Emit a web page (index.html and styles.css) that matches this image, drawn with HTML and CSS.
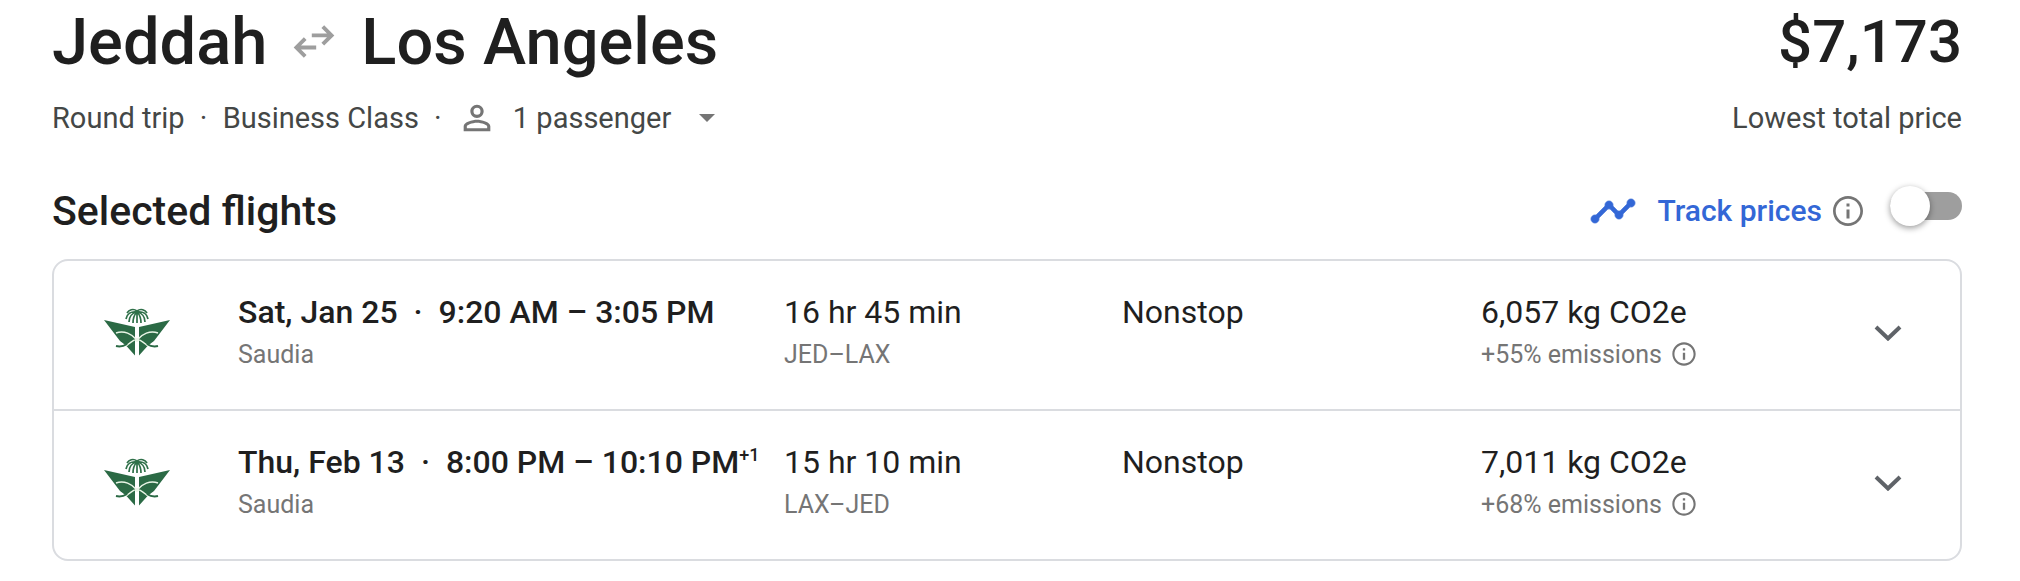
FILE: index.html
```html
<!DOCTYPE html>
<html lang="en">
    <head>
        <meta charset="utf-8">
        <title>Jeddah to Los Angeles</title>
        <meta name="viewport" content="width=device-width, initial-scale=1">
        <link rel="stylesheet" href="styles.css">
    </head>
    <body>
        <svg class="defs" width="0" height="0">
            <symbol id="info" viewBox="0 0 24 24">
                <path d="M11 7h2v2h-2zm0 4h2v6h-2zm1-9C6.48 2 2 6.48 2 12s4.48 10 10 10 10-4.48 10-10S17.52 2 12 2zm0 18.2c-4.5 0-8.2-3.7-8.2-8.2S7.5 3.8 12 3.8s8.2 3.7 8.2 8.2-3.7 8.2-8.2 8.2z"/>
            </symbol>
            <symbol id="chevron" viewBox="0 0 28 16">
                <path d="M2 2l12 11.5L26 2" fill="none" stroke="currentColor" stroke-width="4"/>
            </symbol>
            <symbol id="saudia" viewBox="0 0 66 48">
                <!-- palm -->
                <path d="M33 2v13M33 3c-4-3-8-1-10 2M33 3c4-3 8-1 10 2M33 4c-6-1-10 2-11 7M33 4c6-1 10 2 11 7M33 4c-5 1-8 5-8 10M33 4c5 1 8 5 8 10M33 4c-2 2-4 6-4 11M33 4c2 2 4 6 4 11" fill="none" stroke="#2f7049" stroke-width="1.7"/>
                <!-- wings -->
                <path d="M0 12l31 7v28.500L22 37.500l-6-4.500zM66 12l-31 7v28.500l9-10 6-4.500z" fill="#2b6a45"/>
                <!-- crossed swords -->
                <path d="M12 25c8-3 16 1 21 7 5-6 13-10 21-7M33 31c-4 1-7 4-11 7M33 31c4 1 7 4 11 7" fill="none" stroke="#e9f5e6" stroke-width="1.5"/>
                <path d="M12 38c4 1 8 0 11-2M54 38c-4 1-8 0-11-2" fill="none" stroke="#2b6a45" stroke-width="2"/>
                <circle cx="33" cy="32" r="2" fill="#e9f5e6"/>
            </symbol>
        </svg>

        <div class="trip">
            <header class="header">
                <div>
                    <h1 class="route">
                        Jeddah
                        <svg class="swap" viewBox="0 0 40 32" role="img" aria-label="to and from"><path d="M18 10h18M28 2l8 8-8 8M22 21H4M12 13l-8 8 8 8" fill="none" stroke="currentColor" stroke-width="3.5"/></svg>
                        Los Angeles
                    </h1>
                    <div class="details">
                        <span>Round trip</span>
                        <span class="dot">·</span>
                        <span>Business Class</span>
                        <span class="dot">·</span>
                        <button class="passengers" type="button">
                            <svg class="person" viewBox="0 0 24 24"><path d="M12 5.9a2.1 2.1 0 110 4.2 2.1 2.1 0 010-4.2m0 9c2.97 0 6.1 1.46 6.1 2.1v1.1H5.9V17c0-.64 3.13-2.1 6.1-2.1M12 4C9.79 4 8 5.79 8 8s1.79 4 4 4 4-1.79 4-4-1.79-4-4-4zm0 9c-2.67 0-8 1.34-8 4v3h16v-3c0-2.66-5.33-4-8-4z"/></svg>
                            1 passenger
                            <svg class="caret" viewBox="0 0 16 8"><path d="M0 0h16L8 8z"/></svg>
                        </button>
                    </div>
                </div>
                <div class="total">
                    <div class="price">$7,173</div>
                    <div class="details">Lowest total price</div>
                </div>
            </header>

            <div class="bar">
                <h2 class="heading">Selected flights</h2>
                <div class="track">
                    <svg class="timeline" viewBox="0 0 24 24"><path d="M23 8c0 1.1-.9 2-2 2-.18 0-.35-.02-.51-.07l-3.56 3.55c.05.16.07.34.07.52 0 1.1-.9 2-2 2s-2-.9-2-2c0-.18.02-.36.07-.52l-2.55-2.55c-.16.05-.34.07-.52.07s-.36-.02-.52-.07l-4.55 4.56c.05.16.07.33.07.51 0 1.1-.9 2-2 2s-2-.9-2-2 .9-2 2-2c.18 0 .35.02.51.07l4.56-4.55C8.02 9.36 8 9.18 8 9c0-1.1.9-2 2-2s2 .9 2 2c0 .18-.02.36-.07.52l2.55 2.55c.16-.05.34-.07.52-.07s.36.02.52.07l3.55-3.56C19.02 8.35 19 8.18 19 8c0-1.1.9-2 2-2s2 .9 2 2z" stroke="currentColor" stroke-width=".4"/></svg>
                    <label class="track_label" for="track">Track prices</label>
                    <svg class="info info_large"><use href="#info"/></svg>
                    <input class="switch" type="checkbox" role="switch" id="track">
                </div>
            </div>

            <ul class="flights">
                <li class="flight">
                    <svg class="logo" role="img" aria-label="Saudia"><use href="#saudia"/></svg>
                    <div>
                        <div class="main when">Sat, Jan 25 <span class="sep">·</span> 9:20 AM – 3:05 PM</div>
                        <div class="sub">Saudia</div>
                    </div>
                    <div>
                        <div class="main">16 hr 45 min</div>
                        <div class="sub">JED–LAX</div>
                    </div>
                    <div>
                        <div class="main">Nonstop</div>
                    </div>
                    <div>
                        <div class="main">6,057 kg CO2e</div>
                        <div class="sub">+55% emissions <svg class="info"><use href="#info"/></svg></div>
                    </div>
                    <button class="expand" type="button" aria-label="Flight details"><svg><use href="#chevron"/></svg></button>
                </li>
                <li class="flight">
                    <svg class="logo" role="img" aria-label="Saudia"><use href="#saudia"/></svg>
                    <div>
                        <div class="main when">Thu, Feb 13 <span class="sep">·</span> 8:00 PM – 10:10 PM<sup>+1</sup></div>
                        <div class="sub">Saudia</div>
                    </div>
                    <div>
                        <div class="main">15 hr 10 min</div>
                        <div class="sub">LAX–JED</div>
                    </div>
                    <div>
                        <div class="main">Nonstop</div>
                    </div>
                    <div>
                        <div class="main">7,011 kg CO2e</div>
                        <div class="sub">+68% emissions <svg class="info"><use href="#info"/></svg></div>
                    </div>
                    <button class="expand" type="button" aria-label="Flight details"><svg><use href="#chevron"/></svg></button>
                </li>
            </ul>
        </div>
    </body>
</html>
```
FILE: styles.css
```css
body {
    margin: 0;
    background: #fff;
    color: #1f1f1f;
    font-family: Roboto, sans-serif;
}

h1, h2, ul {
    margin: 0;
    padding: 0;
}

button {
    border: 0;
    padding: 0;
    background: none;
    color: inherit;
    font: inherit;
    cursor: pointer;
}

svg {
    flex: none;
    fill: currentColor;
}

.defs {
    position: absolute;
}

.trip {
    padding: 0 58px 20px 52px;
}

.header, .bar {
    display: flex;
    justify-content: space-between;
}

.route, .price {
    font-size: 65px;
    font-weight: 500;
    line-height: 84px;
}

.price {
    font-size: 60px;
}

.route {
    display: flex;
    align-items: center;
    gap: 25px;
}

.swap {
    width: 44px;
    height: 36px;
    color: #9e9e9e;
}

.details {
    display: flex;
    align-items: center;
    height: 68px;
    font-size: 29px;
    color: #444746;
}

.dot {
    width: 38px;
    text-align: center;
}

.passengers {
    display: flex;
    align-items: center;
}

.person {
    width: 40px;
    height: 40px;
    margin-right: 16px;
    color: #757575;
}

.caret {
    width: 16px;
    height: 8px;
    margin-left: 28px;
    color: #757575;
}

.total {
    display: flex;
    flex-direction: column;
    align-items: flex-end;
}

.bar {
    align-items: center;
    height: 97px;
    padding-top: 10px;
}

.heading {
    font-size: 41px;
    font-weight: 500;
}

.track {
    display: flex;
    align-items: center;
}

.timeline {
    width: 48px;
    height: 48px;
    margin-right: 20px;
    color: #3367d6;
}

.track_label {
    margin-right: 8px;
    font-size: 30px;
    font-weight: 500;
    color: #3367d6;
}

.info {
    width: 28px;
    height: 28px;
    margin-left: 8px;
    color: #757575;
}

.info_large {
    width: 36px;
    height: 36px;
    margin: 0 24px 0 0;
}

.switch {
    appearance: none;
    position: relative;
    width: 72px;
    height: 28px;
    margin: 0 0 10px;
    border-radius: 14px;
    background: #9e9e9e;
    cursor: pointer;
}

.switch::before {
    content: "";
    position: absolute;
    top: -6px;
    left: 0;
    width: 40px;
    height: 40px;
    border-radius: 50%;
    background: #fff;
    box-shadow: 0 2px 6px rgba(0, 0, 0, .4);
}

.switch:checked {
    background: #8ab4f8;
}

.switch:checked::before {
    left: 32px;
}

.flights {
    border: 2px solid #dadce0;
    border-radius: 16px;
    list-style: none;
}

.flight {
    display: grid;
    grid-template-columns: 134px 546fr 338fr 359fr 393fr 28px;
    padding: 29px 58px 33px 50px;
}

.flight + .flight {
    border-top: 2px solid #dadce0;
}

.logo {
    width: 66px;
    height: 48px;
    margin-top: 18px;
}

.main {
    font-size: 32px;
    line-height: 44px;
    white-space: nowrap;
}

.when {
    font-weight: 500;
}

.sep {
    margin: 0 8px;
}

sup {
    font-size: 18px;
    line-height: 0;
}

.sub {
    display: flex;
    align-items: center;
    height: 40px;
    font-size: 25px;
    color: #757575;
}

.expand {
    height: 86px;
    color: #5f6368;
}

.expand svg {
    display: block;
    width: 28px;
    height: 16px;
}
```
